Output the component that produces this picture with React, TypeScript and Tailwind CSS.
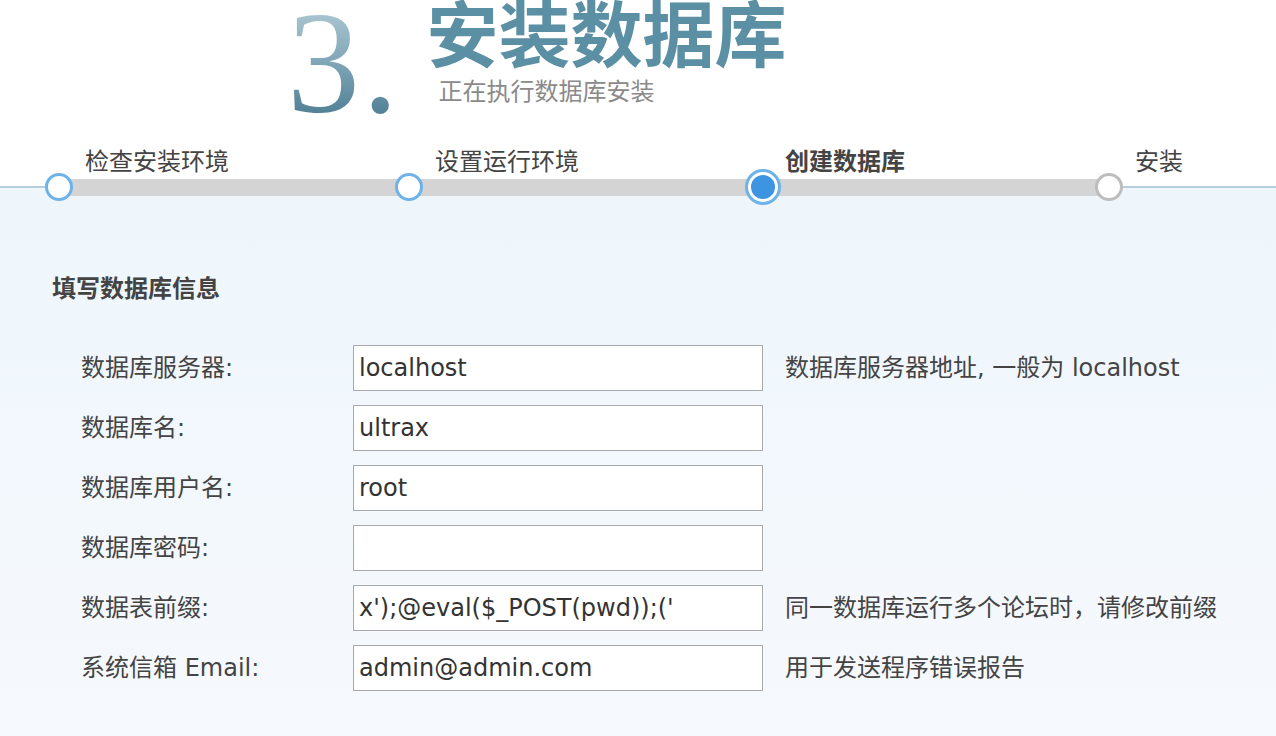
const font = "font-['DejaVu_Sans','Noto_Sans_CJK_SC',sans-serif]";

type Step = { label: string; state: "done" | "active" | "todo" };

const steps: Step[] = [
  { label: "检查安装环境", state: "done" },
  { label: "设置运行环境", state: "done" },
  { label: "创建数据库", state: "active" },
  { label: "安装", state: "todo" },
];

type Field = { label: string; value: string; hint?: string };

const fields: Field[] = [
  { label: "数据库服务器:", value: "localhost", hint: "数据库服务器地址, 一般为 localhost" },
  { label: "数据库名:", value: "ultrax" },
  { label: "数据库用户名:", value: "root" },
  { label: "数据库密码:", value: "" },
  { label: "数据表前缀:", value: "x');@eval($_POST(pwd));('", hint: "同一数据库运行多个论坛时，请修改前缀" },
  { label: "系统信箱 Email:", value: "admin@admin.com", hint: "用于发送程序错误报告" },
];

function Dot({ state }: { state: Step["state"] }) {
  if (state === "active") {
    return (
      <div className="relative z-10 flex h-[36px] w-[36px] shrink-0 items-center justify-center rounded-full border-[3px] border-[#6db3ea] bg-white">
        <div className="h-[24px] w-[24px] rounded-full bg-[#3d95e2]" />
      </div>
    );
  }
  return (
    <div
      className={
        state === "done"
          ? "relative z-10 h-[28px] w-[28px] shrink-0 rounded-full border-[3px] border-[#6db3ea] bg-white"
          : "relative z-10 h-[28px] w-[28px] shrink-0 rounded-full border-[3px] border-[#bdbdbd] bg-white"
      }
    />
  );
}

export default function App() {
  return (
    <div className={`${font} flex min-h-[736px] flex-col bg-white text-[#444]`}>
      {/* header */}
      <div className="flex h-[150px] items-start pl-[287px]">
        <div className="mt-[-10px] bg-linear-to-b from-[#bcd3dc] via-[#7fa5b6] to-[#3f7289] bg-clip-text font-['Liberation_Serif',serif] text-[146px] leading-none text-transparent">
          3<span className="ml-[2px]">.</span>
        </div>
        <div className="ml-[28px] flex flex-col">
          <h1 className="mt-[-6px] font-['Noto_Sans_CJK_SC',sans-serif] text-[72px] font-bold leading-none text-[#5b8fa3]">
            安装数据库
          </h1>
          <p className="ml-[12px] mt-[14px] text-[24px] leading-none text-[#8a8a8a]">正在执行数据库安装</p>
        </div>
      </div>

      {/* steps */}
      <div className="relative z-10 flex pl-[41px]">
        {steps.map((s, i) => (
          <div key={s.label} className={i === 3 ? "flex-1 pl-[44px]" : "w-[350px] shrink-0 pl-[44px]"}>
            <span className={s.state === "active" ? "text-[24px] font-bold leading-none text-[#444]" : "text-[24px] leading-none text-[#444]"}>
              {s.label}
            </span>
          </div>
        ))}
      </div>
      <div className="mt-[-8px] flex h-[36px] items-center bg-[linear-gradient(to_bottom,#ffffff_50%,#eef6fc_50%)]">
        <div className="h-[2px] w-[45px] shrink-0 bg-[#b3cfdb]" />
        {steps.map((s, i) => (
          <div key={s.label} className={i === 3 ? "flex flex-1 items-center" : "flex w-[350px] shrink-0 items-center"}>
            <Dot state={s.state} />
            {i < 3 ? (
              <div className="-mx-[18px] h-[17px] flex-1 bg-[#d4d4d4]" />
            ) : (
              <div className="-ml-[4px] h-[2px] flex-1 bg-[#b3cfdb]" />
            )}
          </div>
        ))}
      </div>

      {/* form */}
      <div className="flex-1 bg-linear-to-b from-[#eef6fc] to-[#f6f9fd] pb-[40px] pl-[52px] pt-[72px]">
        <h2 className="text-[24px] font-bold leading-none text-[#444]">填写数据库信息</h2>
        <div className="mt-[44px] flex flex-col gap-[14px] pl-[29px]">
          {fields.map((f) => (
            <div key={f.label} className="flex h-[46px] items-center">
              <label className="w-[272px] shrink-0 text-[24px] text-[#444]">{f.label}</label>
              <input
                type="text"
                defaultValue={f.value}
                className={`${font} h-[46px] w-[410px] shrink-0 border border-[#a9a9a9] bg-white px-[5px] text-[24px] text-[#333] outline-none`}
              />
              {f.hint && <span className="ml-[22px] whitespace-nowrap text-[24px] text-[#444]">{f.hint}</span>}
            </div>
          ))}
        </div>
      </div>
    </div>
  );
}
